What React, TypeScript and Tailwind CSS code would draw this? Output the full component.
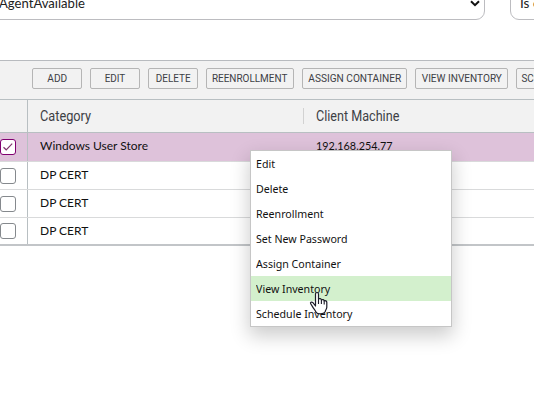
const buttons = [
  { label: 'ADD', box: 'w-[50px]', text: 'scale-x-[0.88]' },
  { label: 'EDIT', box: 'w-[50px]', text: 'scale-x-[0.86]' },
  { label: 'DELETE', box: 'w-[50px]', text: 'scale-x-[0.86]' },
  { label: 'REENROLLMENT', box: 'w-[88px]', text: 'scale-x-[0.865]' },
  { label: 'ASSIGN CONTAINER', box: 'w-[105px]', text: 'scale-x-[0.88]' },
  { label: 'VIEW INVENTORY', box: 'w-[93px]', text: 'scale-x-[0.875]' },
  { label: 'SCHEDULE INVENTORY', box: 'w-[116px]', text: 'scale-x-[0.86]' },
];

const rows = [
  { category: 'Windows User Store', machine: '192.168.254.77', checked: true, height: 'h-[29px]', pad: 'pb-[2px]' },
  { category: 'DP CERT', machine: '', checked: false, height: 'h-7', pad: 'pb-[2px]' },
  { category: 'DP CERT', machine: '', checked: false, height: 'h-7', pad: 'pb-[2px]' },
  { category: 'DP CERT', machine: '', checked: false, height: 'h-[26px]', pad: 'pb-0' },
];

const menuItems = [
  'Edit',
  'Delete',
  'Reenrollment',
  'Set New Password',
  'Assign Container',
  'View Inventory',
  'Schedule Inventory',
];

function Filters() {
  return (
    <div className="flex h-[60px] items-start gap-[25px] font-['Lato',sans-serif] text-[13.5px] text-[#222]">
      <div className="-ml-3 -mt-4 flex h-9 w-[497px] shrink-0 items-center justify-between rounded-[9px] border border-[#bcbcc0] pl-[10px] pr-[4px]">
        <span className="origin-left scale-x-[0.97] pt-[2px]">AgentAvailable</span>
        <svg className="mt-[3px]" width="10" height="7" viewBox="0 0 10 7" fill="none">
          <path d="M1 1.2 5 5.2 9 1.2" stroke="#111" strokeWidth="2" />
        </svg>
      </div>
      <div className="-mt-4 flex h-9 w-[120px] shrink-0 items-center rounded-[9px] border border-[#bcbcc0] pl-[9px]">
        <span className="whitespace-nowrap pt-[2px]">Is equal to</span>
      </div>
    </div>
  );
}

function Toolbar() {
  return (
    <div className="flex h-[39px] items-start gap-2 border-t border-[#b8bbbf] bg-[#f2f2f2] pl-8 pt-[7px]">
      {buttons.map((b) => (
        <button
          key={b.label}
          className={`${b.box} flex h-[21px] shrink-0 items-center justify-center rounded-[2px] border border-[#b5b5b5] bg-[#f2f2f2]`}
        >
          <span className={`${b.text} whitespace-nowrap font-['Roboto',sans-serif] text-[11.5px] leading-none text-[#3d4045]`}>
            {b.label}
          </span>
        </button>
      ))}
    </div>
  );
}

function Checkbox({ checked }: { checked: boolean }) {
  return (
    <span
      className={`flex h-4 w-4 items-center justify-center rounded-[3px] border bg-white ${
        checked ? 'border-[#800070]' : 'border-[#85898d]'
      }`}
    >
      {checked && (
        <svg width="12" height="10" viewBox="0 0 12 10" fill="none">
          <path d="m1.5 5.2 2.7 2.6 6-6.2" stroke="#80386f" strokeWidth="1.2" />
        </svg>
      )}
    </span>
  );
}

function Table() {
  return (
    <div className="border-b-2 border-[#c2c5c8]">
      <div className="flex h-[34px] items-center border-y border-[#b8bfc2] bg-[#f2f2f2] font-['Roboto',sans-serif] text-[14px] text-[#3d4045]">
        <div className="h-full w-7 shrink-0 border-r border-[#b8bfc2]" />
        <div className="w-[275px] pl-3">
          <span className="inline-block origin-left scale-x-[0.91]">Category</span>
        </div>
        <div className="flex h-4 items-center border-l border-[#d2d2d2] pl-3">
          <span className="inline-block origin-left scale-x-[0.9]">Client Machine</span>
        </div>
      </div>
      {rows.map((r, i) => (
        <div
          key={i}
          className={`${r.height} flex items-center border-b border-[#d9dadb] font-['Lato',sans-serif] text-[12px] text-[#111] last:border-b-0 ${
            r.checked ? 'bg-[#dec2da]' : 'bg-white'
          }`}
        >
          <div className="flex h-full w-7 shrink-0 items-center border-r border-[#b8bfc2]">
            <Checkbox checked={r.checked} />
          </div>
          <div className={`w-[276px] pl-3 ${r.pad}`}>{r.category}</div>
          <div className={`pl-3 ${r.pad}`}>
            <span className="inline-block origin-left scale-x-[0.9]">{r.machine}</span>
          </div>
        </div>
      ))}
    </div>
  );
}

function ContextMenu() {
  return (
    <ul className="absolute left-[250px] top-[150px] w-[202px] border border-[#c6c6c6] bg-white font-['Noto_Sans',sans-serif] text-[11.5px] text-[#111] shadow-[0_8px_18px_1px_rgba(0,0,0,0.2)]">
      {menuItems.map((item) => (
        <li
          key={item}
          className={`flex h-[25px] items-center pl-[5px] pt-px ${item === 'View Inventory' ? 'bg-[#d3f0cd]' : ''}`}
        >
          <span className="origin-left scale-x-[0.925]">{item}</span>
        </li>
      ))}
    </ul>
  );
}

function HandCursor() {
  return (
    <svg className="absolute left-[309px] top-[291px]" width="20" height="25" viewBox="0 0 20 25">
      <path
        d="M6.5 15V3.2c0-2.3 3-2.3 3 0V8c.9-.8 2.8-.3 2.9.9.9-.7 2.6-.2 2.8.9 1.1-.5 2.6.2 2.6 1.5v4.9c0 2-1.6 3-1.6 4.6-1.5 2.6-7.6 2.8-9.3.3-.5-2-2.4-3.6-3.4-5.5l-1.8-2.8c-.8-1.2.8-2.3 2-1.4z"
        fill="#fff"
        stroke="#1c1c28"
        strokeWidth="1.2"
        strokeLinejoin="round"
      />
      <path d="M9.5 8v5M12.4 9v4M15.2 10v3.5" stroke="#1c1c28" strokeWidth="1.1" />
    </svg>
  );
}

export default function App() {
  return (
    <main className="relative h-[408px] w-[534px] overflow-hidden bg-white">
      <Filters />
      <Toolbar />
      <Table />
      <ContextMenu />
      <HandCursor />
    </main>
  );
}
